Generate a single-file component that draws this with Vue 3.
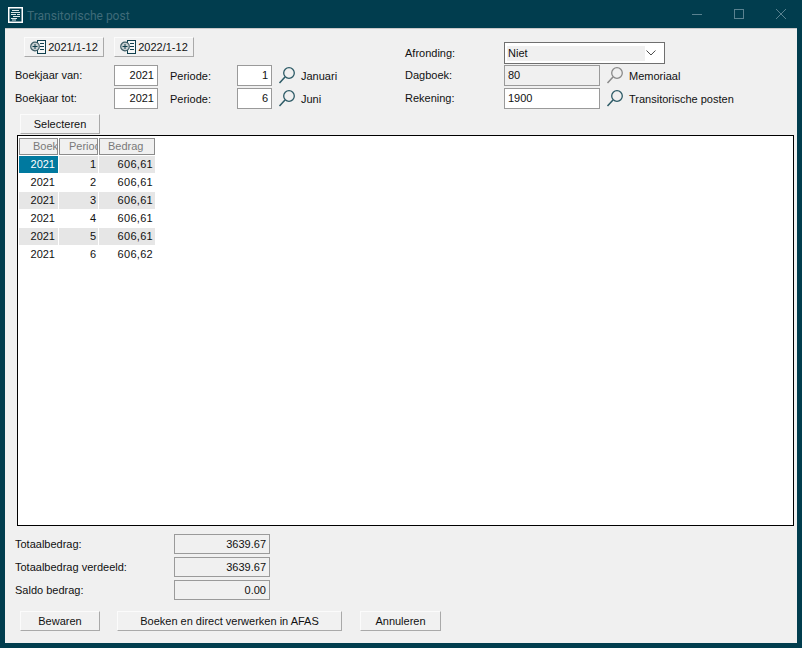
<template>
  <div class="window">
    <!-- titelbalk -->
    <div class="titlebar">
      <svg class="app-icon" width="15" height="16" viewBox="0 0 15 16">
        <rect x="0.75" y="0.75" width="13.5" height="14.5" fill="#013d4e" stroke="#fff" stroke-width="1.5" />
        <path d="M4 3.5h7M3 5.5h9M3 7.5h5M9 7.5h3M5 9.5h7M3 11.5h6M4 13h4" stroke="#dbe6e8" stroke-width="1" />
      </svg>
      <span class="title">Transitorische post</span>
      <div class="win-buttons">
        <svg width="12" height="12" viewBox="0 0 12 12"><path d="M1 6.5h10" stroke="#5a8290" /></svg>
        <svg width="12" height="12" viewBox="0 0 12 12"><rect x="1.5" y="1.5" width="9" height="9" fill="none" stroke="#5a8290" /></svg>
        <svg width="12" height="12" viewBox="0 0 12 12"><path d="M1 1l10 10M11 1L1 11" stroke="#5a8290" /></svg>
      </div>
    </div>

    <div class="client">
      <div class="top">
        <div class="left">
          <div class="quick">
            <button v-for="q in quickButtons" :key="q" class="btn quick-btn">
              <svg width="16" height="14" viewBox="0 0 16 14">
                <rect x="7.5" y="0.5" width="8" height="13" fill="#f4f6f6" stroke="#0f3f4c" />
                <path d="M10 3.5h4M10 6.5h4M10 9.5h4" stroke="#0f3f4c" />
                <circle cx="5" cy="6.5" r="4.3" fill="#c9d0d2" stroke="#3f5f68" stroke-width="1.2" />
                <path d="M2.5 6.5h5M5 4v5" stroke="#0f3f4c" />
              </svg>
              <span>{{ q }}</span>
            </button>
          </div>
          <div v-for="r in rangeRows" :key="r.label" class="range-row">
            <label class="lbl-year">{{ r.label }}</label>
            <div class="input num year">{{ r.year }}</div>
            <label class="lbl-period">Periode:</label>
            <div class="input num period">{{ r.period }}</div>
            <svg class="lens" width="18" height="18" viewBox="0 0 18 18">
              <circle cx="11" cy="6" r="5.3" fill="none" stroke="#2c5a66" stroke-width="1.3" />
              <path d="M7 10L1.5 16" stroke="#2c5a66" stroke-width="1.5" />
            </svg>
            <span class="lookup">{{ r.month }}</span>
          </div>
        </div>

        <div class="right">
          <div class="right-row first">
            <label class="lbl-right">Afronding:</label>
            <div class="combo">
              <span class="combo-val">Niet</span>
              <svg width="12" height="8" viewBox="0 0 12 8"><path d="M1.5 1.5L6 6l4.5-4.5" fill="none" stroke="#444" /></svg>
            </div>
          </div>
          <div class="right-row">
            <label class="lbl-right">Dagboek:</label>
            <div class="input wide disabled">80</div>
            <svg class="lens" width="18" height="18" viewBox="0 0 18 18">
              <circle cx="11" cy="6" r="5.3" fill="none" stroke="#8a8a8a" stroke-width="1.3" />
              <path d="M7 10L1.5 16" stroke="#8a8a8a" stroke-width="1.5" />
            </svg>
            <span class="lookup">Memoriaal</span>
          </div>
          <div class="right-row">
            <label class="lbl-right">Rekening:</label>
            <div class="input wide">1900</div>
            <svg class="lens" width="18" height="18" viewBox="0 0 18 18">
              <circle cx="11" cy="6" r="5.3" fill="none" stroke="#2c5a66" stroke-width="1.3" />
              <path d="M7 10L1.5 16" stroke="#2c5a66" stroke-width="1.5" />
            </svg>
            <span class="lookup">Transitorische posten</span>
          </div>
        </div>
      </div>

      <button class="btn select-btn">Selecteren</button>

      <!-- tabel met perioden -->
      <div class="grid-box">
        <div class="grid">
          <div class="head">Boekjaar</div>
          <div class="head">Periode</div>
          <div class="head">Bedrag</div>
          <template v-for="(row, i) in rows" :key="row.period">
            <div class="cell year-cell" :class="{ alt: i % 2 === 0, current: i === 0 }">{{ row.year }}</div>
            <div class="cell" :class="{ alt: i % 2 === 0 }">{{ row.period }}</div>
            <div class="cell amount" :class="{ alt: i % 2 === 0 }">{{ row.amount }}</div>
          </template>
        </div>
      </div>

      <div class="totals">
        <div v-for="t in totals" :key="t.label" class="total-row">
          <label class="lbl-total">{{ t.label }}</label>
          <div class="input num disabled total">{{ t.value }}</div>
        </div>
      </div>

      <div class="actions">
        <button class="btn save">Bewaren</button>
        <button class="btn book">Boeken en direct verwerken in AFAS</button>
        <button class="btn cancel">Annuleren</button>
      </div>
    </div>
  </div>
</template>

<script setup>
const quickButtons = ['2021/1-12', '2022/1-12'];

const rangeRows = [
  { label: 'Boekjaar van:', year: 2021, period: 1, month: 'Januari' },
  { label: 'Boekjaar tot:', year: 2021, period: 6, month: 'Juni' },
];

const rows = [
  { year: 2021, period: 1, amount: '606,61' },
  { year: 2021, period: 2, amount: '606,61' },
  { year: 2021, period: 3, amount: '606,61' },
  { year: 2021, period: 4, amount: '606,61' },
  { year: 2021, period: 5, amount: '606,61' },
  { year: 2021, period: 6, amount: '606,62' },
];

const totals = [
  { label: 'Totaalbedrag:', value: '3639.67' },
  { label: 'Totaalbedrag verdeeld:', value: '3639.67' },
  { label: 'Saldo bedrag:', value: '0.00' },
];
</script>

<style>
html,
body {
  margin: 0;
  background: #013d4e;
}
</style>

<style scoped>
.window {
  width: 802px;
  height: 648px;
  box-sizing: border-box;
  padding: 0 5px 5px;
  background: #013d4e;
  display: flex;
  flex-direction: column;
  font-family: "Liberation Sans", Arial, sans-serif;
  font-size: 11px;
  color: #111;
}

.titlebar {
  height: 28px;
  flex: none;
  display: flex;
  align-items: center;
  padding-left: 3px;
}

.app-icon {
  margin-right: 4px;
  margin-top: 1px;
}

.title {
  font-family: Roboto, sans-serif;
  font-size: 12px;
  color: #3f6b79;
  margin-top: 3px;
}

.win-buttons {
  margin-left: auto;
  display: flex;
  gap: 30px;
  margin-right: 10px;
  margin-top: 0;
}

.client {
  flex: 1;
  background: #f0f0f0;
  border-top: 1px solid #c8c8c8;
  box-sizing: border-box;
  padding: 8px 3px 0 10px;
  display: flex;
  flex-direction: column;
}

.top {
  display: flex;
}

.left {
  width: 390px;
}

.quick {
  display: flex;
  gap: 10px;
  padding-left: 9px;
  margin-bottom: 8px;
}

.btn {
  font: inherit;
  color: #111;
  background: #f1f1f1;
  border: 1px solid;
  border-color: #fbfbfb #a9a9a9 #a9a9a9 #fbfbfb;
  height: 20px;
  padding: 0;
  flex: none;
}

.quick-btn {
  width: 80px;
  display: flex;
  align-items: center;
  justify-content: center;
  gap: 2px;
}

.range-row {
  display: flex;
  align-items: center;
  height: 21px;
  margin-bottom: 2px;
}

.lbl-year {
  width: 99px;
  margin-top: -1px;
}

.lbl-period {
  width: 67px;
  flex: none;
  margin-left: 12px;
  white-space: nowrap;
}

.input {
  box-sizing: border-box;
  height: 21px;
  line-height: 19px;
  border: 1px solid #9a9a9a;
  background: #fff;
  padding: 0 3px;
}

.num {
  text-align: right;
  padding-right: 3px;
}

.year {
  width: 44px;
}

.period {
  width: 35px;
}

.lens {
  margin-left: 6px;
  margin-right: 5px;
  flex: none;
}

.lookup {
  white-space: nowrap;
  margin-top: 1px;
}

.right {
  padding-top: 5px;
}

.right-row {
  display: flex;
  align-items: center;
  height: 21px;
  margin-bottom: 2px;
}

.right-row.first {
  height: 22px;
  margin-bottom: 1px;
}

.lbl-right {
  width: 99px;
  margin-top: -1px;
}

.combo {
  box-sizing: border-box;
  width: 161px;
  height: 22px;
  border: 1px solid #6f6f6f;
  background: #fff;
  display: flex;
  align-items: center;
  padding: 2px 7px 2px 2px;
  justify-content: space-between;
}

.combo-val {
  width: 139px;
  height: 15px;
  line-height: 15px;
  background: #f0f0f0;
  padding-left: 1px;
  box-sizing: border-box;
}

.wide {
  width: 96px;
}

.disabled {
  background: #f0f0f0;
}

.select-btn {
  width: 80px;
  margin: 3px 0 1px 5px;
}

.grid-box {
  box-sizing: border-box;
  height: 391px;
  margin-left: 2px;
  border: 1px solid #000;
  background: #fff;
  padding: 2px 1px;
}

.grid {
  display: grid;
  grid-template-columns: 39px 39px 56px;
  grid-auto-rows: 17px;
  gap: 1px;
  justify-content: start;
}

.head {
  box-sizing: border-box;
  border: 1px solid #8c8c8c;
  background: #f0f0f0;
  color: #7a7a7a;
  line-height: 15px;
  overflow: hidden;
  white-space: nowrap;
  padding-left: 9px;
}

.head:first-child {
  padding-left: 13px;
}

.head:nth-child(3) {
  padding-left: 8px;
}

.cell {
  text-align: right;
  padding-right: 2px;
  line-height: 17px;
  box-sizing: border-box;
}

.year-cell {
  padding-right: 3px;
}

.amount {
  letter-spacing: 0.3px;
}

.alt {
  background: #e6e6e6;
}

.current {
  background: #00799f;
  color: #fff;
}

.totals {
  margin-top: 8px;
}

.total-row {
  display: flex;
  align-items: center;
  height: 20px;
  margin-bottom: 3px;
}

.lbl-total {
  width: 159px;
}

.total {
  width: 96px;
  height: 20px;
  line-height: 18px;
}

.actions {
  display: flex;
  margin: 8px 0 0 5px;
}

.save {
  width: 80px;
  margin-right: 17px;
}

.book {
  width: 225px;
  margin-right: 18px;
}

.cancel {
  width: 81px;
}
</style>
